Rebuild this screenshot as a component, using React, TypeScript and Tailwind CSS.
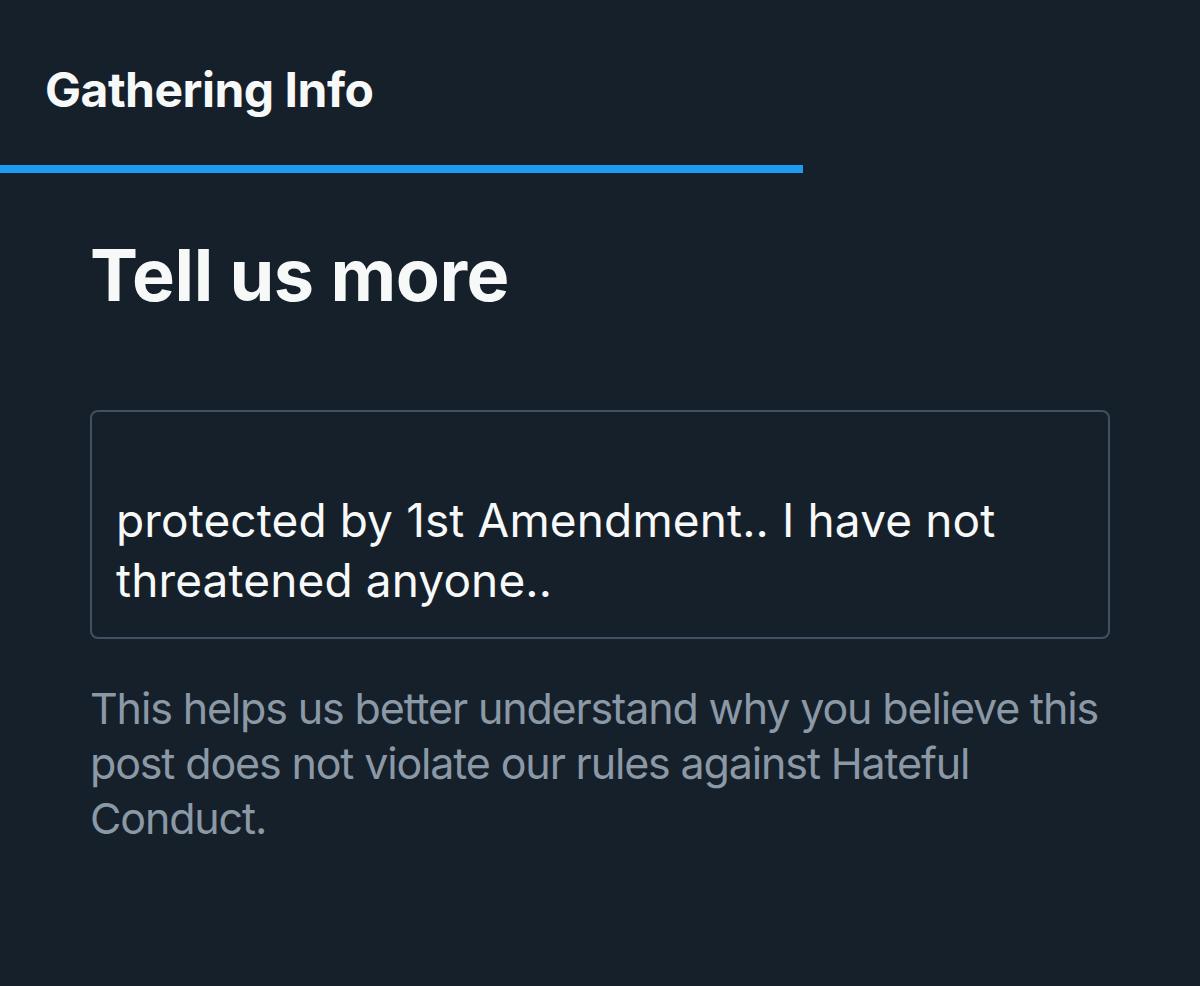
import React from "react";

export default function App() {
  const font = { fontFamily: "Inter, 'Noto Sans', sans-serif" };
  return (
    <div className="w-[1200px] h-[986px] bg-[#16202b] overflow-hidden" style={font}>
      <div className="h-[165px] pl-[45px] pt-[66px]">
        <div className="text-[48px] leading-none font-bold text-[#f7f9f9] whitespace-nowrap tracking-[-0.5px]">Gathering Info</div>
      </div>
      <div className="w-[803px] h-[8px] bg-[#1d9bf0]" />
      <div className="pl-[90px] pr-[90px] pt-[66px]">
        <h1 className="text-[72px] leading-none font-bold text-[#f7f9f9] whitespace-nowrap tracking-[-0.4px]">Tell us more</h1>
        <div className="mt-[99px] h-[229px] border-2 border-[#415162] rounded-[8px] pl-[24px] pt-[78px]">
          <div className="text-[46px] leading-[60px] text-[#f7f9f9] whitespace-nowrap tracking-[0.12px]">
            protected by 1st Amendment.. I have not
            <br />
            threatened anyone..
          </div>
        </div>
        <p className="mt-[42px] text-[43px] leading-[55px] text-[#8b98a5] whitespace-nowrap tracking-[-1.15px]">
          This helps us better understand why you believe this
          <br />
          post does not violate our rules against Hateful
          <br />
          Conduct.
        </p>
      </div>
    </div>
  );
}
